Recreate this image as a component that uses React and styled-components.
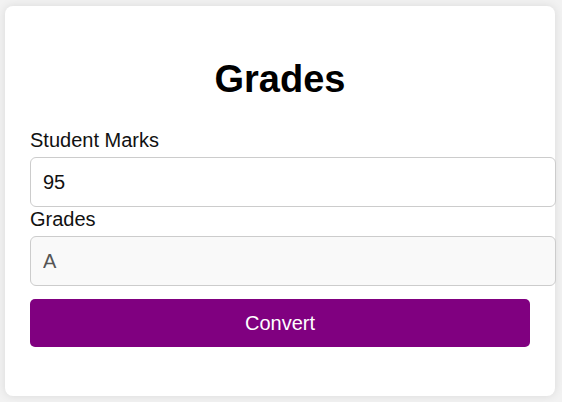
import { useState } from 'react';
import styled, { createGlobalStyle } from 'styled-components';

const GlobalStyle = createGlobalStyle`
    body {
        margin: 0;
        background: #f2f2f2;
        font-family: "Liberation Sans", Arial, sans-serif;
    }
`;

const Page = styled.div`
    display: flex;
    align-items: flex-start;
    padding: 6px 5px;
`;

const Card = styled.div`
    width: 500px;
    padding: 25px;
    background: #ffffff;
    border-radius: 8px;
    box-shadow: 0 0 10px rgba(0, 0, 0, 0.1);
`;

const Title = styled.h1`
    font-size: 38px;
    font-weight: bold;
    text-align: center;
    color: #000;
    margin: 27px 0 27px;
`;

const Label = styled.label`
    display: block;
    font-size: 20px;
    line-height: 24px;
    color: #111;
    margin-bottom: 5px;
`;

const Input = styled.input`
    display: block;
    width: 100%;
    margin: 0 0 ${p => p.$gap || 0}px;
    padding: 12.5px 12px;
    font-size: 20px;
    font-family: inherit;
    color: ${p => (p.readOnly ? '#555' : '#111')};
    background: ${p => (p.readOnly ? '#f9f9f9' : '#ffffff')};
    border: 1px solid #ccc;
    border-radius: 6px;
    outline: none;
`;

const Button = styled.button`
    display: block;
    width: 100%;
    margin: 0 0 24px;
    padding: 12.5px 12px;
    font-size: 20px;
    font-family: inherit;
    color: #fff;
    background: #800080;
    border: none;
    border-radius: 5px;
    cursor: pointer;
`;

const toGrade = m => {
    const n = Number(m);
    if (n >= 90) return 'A';
    if (n >= 80) return 'B';
    if (n >= 70) return 'C';
    if (n >= 60) return 'D';
    return 'F';
};

export default function App() {
    const [marks, setMarks] = useState('95');
    const [grade, setGrade] = useState('A');

    return (
        <Page>
            <GlobalStyle />
            <Card>
                <Title>Grades</Title>
                <Label htmlFor="marks">Student Marks</Label>
                <Input id="marks" value={marks} onChange={e => setMarks(e.target.value)} />
                <Label htmlFor="grade">Grades</Label>
                <Input id="grade" value={grade} readOnly $gap={13} />
                <Button onClick={() => setGrade(toGrade(marks))}>Convert</Button>
            </Card>
        </Page>
    );
}
